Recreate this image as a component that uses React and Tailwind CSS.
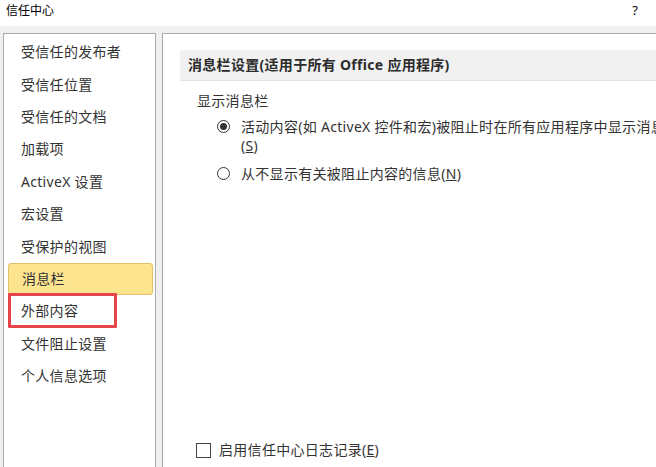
import React from "react";

const items = [
  "受信任的发布者",
  "受信任位置",
  "受信任的文档",
  "加载项",
  "ActiveX 设置",
  "宏设置",
  "受保护的视图",
  "消息栏",
  "外部内容",
  "文件阻止设置",
  "个人信息选项",
];

function Radio({ checked }) {
  return (
    <span className="w-[13px] h-[13px] rounded-full border border-[#333] flex items-center justify-center shrink-0 bg-white">
      {checked && <span className="w-[7px] h-[7px] rounded-full bg-[#333]" />}
    </span>
  );
}

export default function App() {
  return (
    <div className="w-[656px] h-[467px] bg-[#f0f0f0] overflow-hidden flex flex-col font-['Noto_Sans','Noto_Sans_CJK_SC',sans-serif] text-[#333]">
      <div className="h-[26px] bg-white flex items-start justify-between pt-[3px] pl-[6px] pr-[18px] shrink-0">
        <span className="text-[12px] leading-[14px] text-black font-['Noto_Sans_CJK_SC',sans-serif]">信任中心</span>
        <span className="text-[13px] leading-[14px] text-black">?</span>
      </div>
      <div className="flex-1 flex pt-[7px] pl-[3px] gap-[6px] min-h-0 tracking-[0.3px]">
        <div className="w-[153px] border border-b-0 border-[#ababab] bg-white relative pt-[2px]">
          {items.map((t, i) => {
            const sel = t === "消息栏";
            return (
              <div
                key={t}
                className={
                  "h-[32.4px] flex items-center text-[14px] leading-[18px] ml-[4px] mr-[2px] pl-[13px] whitespace-nowrap " +
                  (sel
                    ? "bg-[#fde48f] border border-[#e2c068] rounded-[3px] pl-[12px]"
                    : "")
                }
              >
                {t}
              </div>
            );
          })}
          <div className="absolute left-[4px] top-[259px] w-[109px] h-[35px] border-[3px] border-[#e5464b] rounded-[1px]" />
        </div>
        <div className="flex-1 border-l border-t border-[#ababab] bg-white overflow-hidden flex flex-col min-w-0">
          <div className="mt-[16px] ml-[17px] h-[31px] bg-[#f1f1f2] border-b border-[#e2e2e2] flex items-center pl-[8px] shrink-0">
            <span className="text-[14px] leading-[18px] font-bold whitespace-nowrap text-[#2b2b2b]">
              消息栏设置(适用于所有 Office 应用程序)
            </span>
          </div>
          <div className="ml-[34px] mt-[10px] text-[14px] leading-[20px] whitespace-nowrap">显示消息栏</div>
          <div className="ml-[54px] mt-[6px] flex items-start gap-[11px] whitespace-nowrap">
            <div className="h-[19px] flex items-center"><Radio checked /></div>
            <div className="text-[14px] leading-[19px]">
              <div>活动内容(如 ActiveX 控件和宏)被阻止时在所有应用程序中显示消息栏</div>
              <div>(<span className="underline">S</span>)</div>
            </div>
          </div>
          <div className="ml-[54px] mt-[9px] flex items-center gap-[11px] whitespace-nowrap">
            <Radio />
            <span className="text-[14px] leading-[19px]">从不显示有关被阻止内容的信息(<span className="underline">N</span>)</span>
          </div>
          <div className="flex-1" />
          <div className="ml-[33px] mb-[7px] flex items-center gap-[8px] whitespace-nowrap">
            <span className="w-[15px] h-[15px] border-[1.5px] border-[#444] bg-white shrink-0" />
            <span className="text-[14px] leading-[20px]">启用信任中心日志记录(<span className="underline">E</span>)</span>
          </div>
        </div>
      </div>
    </div>
  );
}
